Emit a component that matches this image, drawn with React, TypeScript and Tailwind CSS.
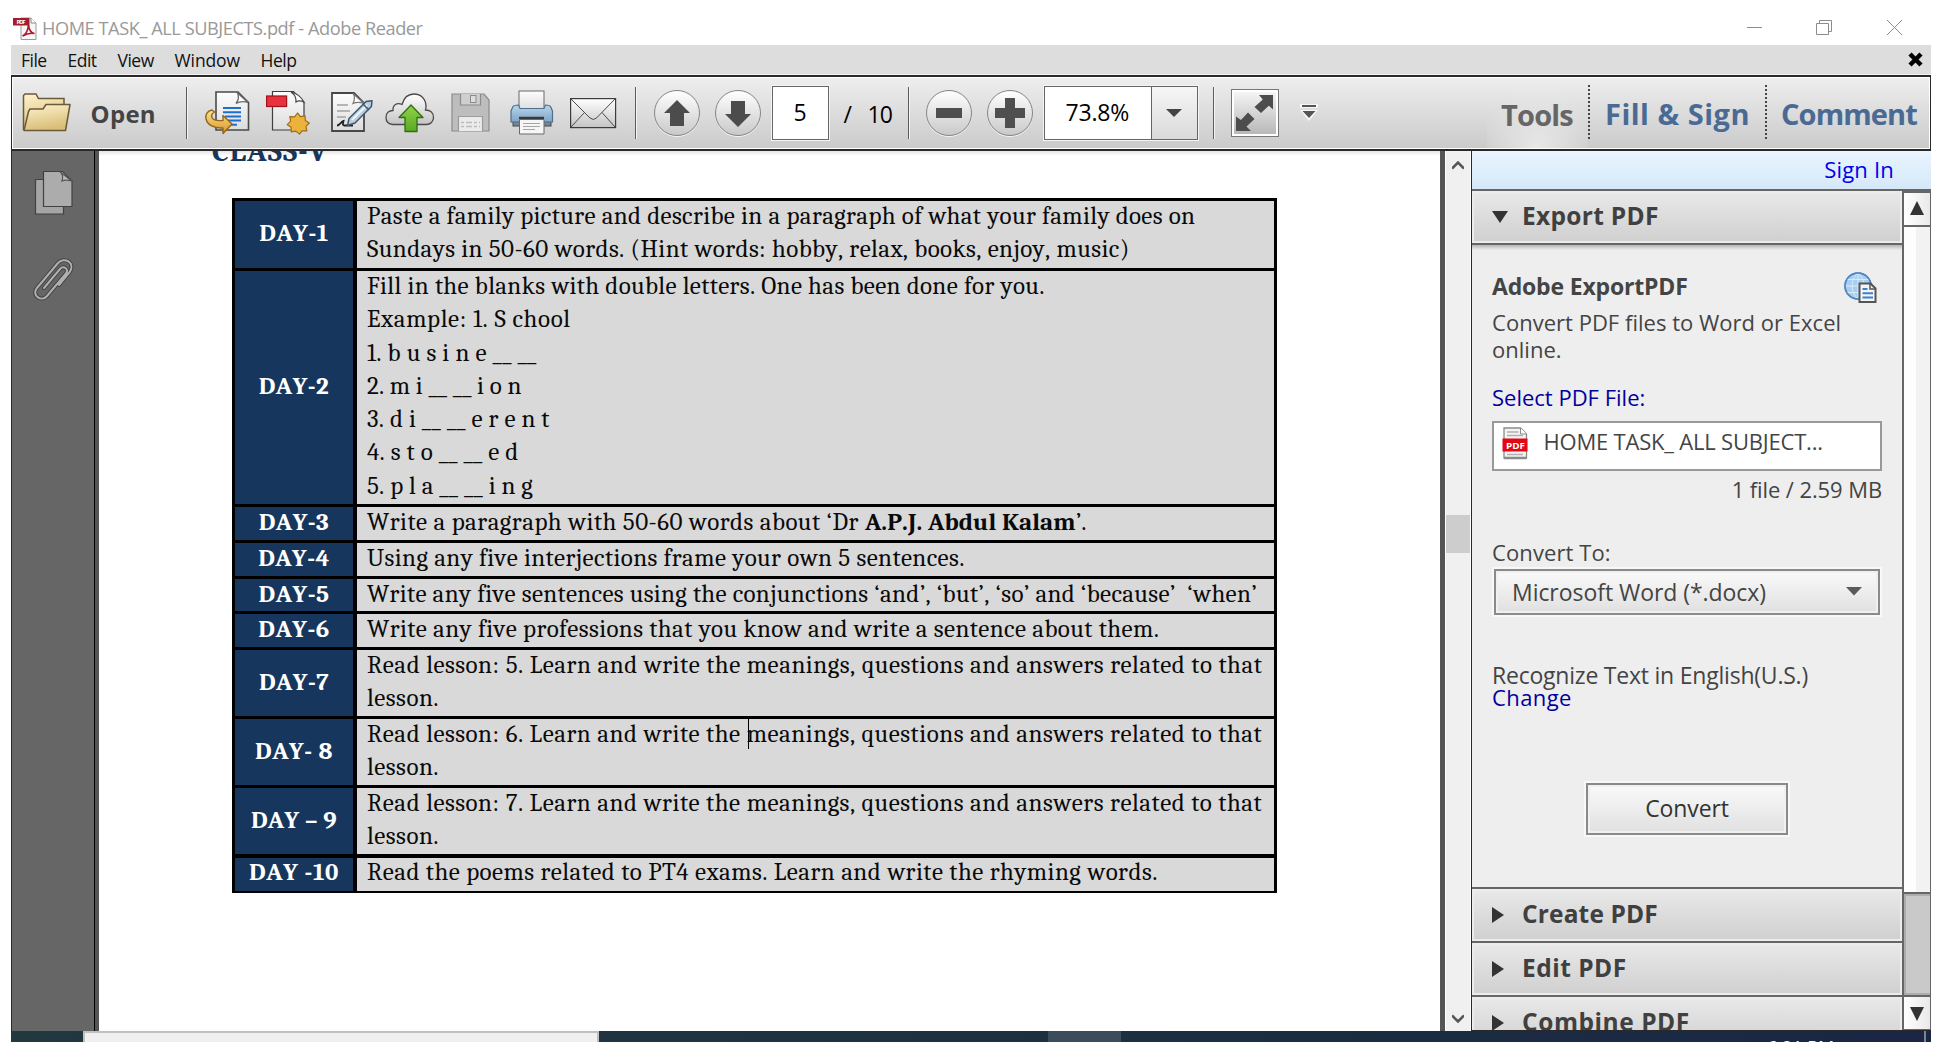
import type { ReactNode } from "react";

/* ---------- shared bits ---------- */

function Separator({ className }: { className: string }) {
  return <div className={`h-[52px] w-px shrink-0 bg-[#5c5c5c] shadow-[1px_0_0_#f4f4f4] ${className}`} />;
}

function RoundButton({ className, children }: { className: string; children: ReactNode }) {
  return (
    <button
      className={`flex size-[46px] shrink-0 items-center justify-center rounded-full border-[1.5px] border-[#858585] bg-linear-to-b from-white to-[#c9c9c9] shadow-[0_1px_0_#f5f5f5] ${className}`}
    >
      {children}
    </button>
  );
}

/* ---------- icons ---------- */

function ReaderIcon() {
  return (
    <svg width="24" height="24" viewBox="0 0 24 24">
      <path d="M8 1h10l5 5v16.500H8z" fill="#f6f6f6" stroke="#9a9a9a" strokeWidth="1" />
      <path d="M18 1v5h5" fill="#fff" stroke="#8a8a8a" strokeWidth="1" />
      <path d="M9.500 19c3-1.500 5.500-6 6-11 .5 5 2.500 8 6 8.500-4-.8-8 .2-12 2.500z" fill="none" stroke="#b3172b" strokeWidth="1.700" />
      <rect x="0" y="1" width="16.500" height="7.500" fill="#a51c2e" />
      <text x="3.600" y="7" fontSize="6" fontWeight="700" fontFamily="Open Sans" fill="#fff" textLength="9">PDF</text>
    </svg>
  );
}

function FolderIcon() {
  return (
    <svg width="50" height="42" viewBox="0 0 50 42">
      <defs>
        <linearGradient id="fold" x1="0" y1="0" x2="0.300" y2="1">
          <stop offset="0" stopColor="#fff3cf" />
          <stop offset="1" stopColor="#d9be78" />
        </linearGradient>
      </defs>
      <path d="M1.500 38V3.500L3 2h11l2.500 4.500H42V12" fill="url(#fold)" stroke="#6b5a39" strokeWidth="1.500" />
      <path d="M2 38.500L6.500 19.500 8 17h13l3-4.500H48L43.500 38.500z" fill="url(#fold)" stroke="#6b5a39" strokeWidth="1.500" strokeLinejoin="round" />
    </svg>
  );
}

function ConvertIcon() {
  return (
    <svg width="46" height="46" viewBox="0 0 46 46">
      <defs>
        <linearGradient id="pg" x1="0" y1="0" x2="0" y2="1">
          <stop offset="0" stopColor="#fdfdfd" />
          <stop offset="1" stopColor="#dcdcdc" />
        </linearGradient>
        <linearGradient id="gold" x1="0" y1="0" x2="0" y2="1">
          <stop offset="0" stopColor="#fbe28e" />
          <stop offset="1" stopColor="#d9962a" />
        </linearGradient>
      </defs>
      <path d="M12 2h22l10.500 10.500V40H12z" fill="url(#pg)" stroke="#4a4a4a" strokeWidth="1.600" />
      <path d="M33 2.500c2 3 2 7-1 11 4-2.500 9-2 12-1z" fill="#fff" stroke="#6a6a6a" strokeWidth="1.300" />
      <path d="M19 18h18M19 22.200h18M21 26.400h16M24 30.600h13M27 34.800h6" stroke="#1c6fd0" strokeWidth="2" />
      <path d="M8 20c-5 1-7 5-6 9 1.500 6 8 9.500 17 9v5.500l9-9.500-9-8.500v5c-6 .5-10-.5-11-3-1-2 0-4 2.500-5.500z" fill="url(#gold)" stroke="#94651a" strokeWidth="1.400" strokeLinejoin="round" />
    </svg>
  );
}

function CreatePdfIcon() {
  return (
    <svg width="44" height="46" viewBox="0 0 44 46">
      <path d="M6.500 1.500h21l10.500 11v27.500H6.500z" fill="url(#pg)" stroke="#3f3f3f" strokeWidth="1.200" />
      <path d="M25 2c4 3 5 5 5 10 2-1.500 5-1.500 8 0C35 7 30 3 25 2z" fill="#fff" stroke="#4a4a4a" strokeWidth="1.200" />
      <rect x="0.600" y="6" width="20" height="10.500" fill="#e8323d" stroke="#a3121d" strokeWidth="1.200" />
      <path
        d="M32.500 24.500l3 3.600 4.600-.8.200 4.700 4 2.500-3.300 3.300.8 4.600-4.700 0-2.600 3.200-3.600-3-4.700.8-.1-4.700-3.800-2.500 3.300-3.500-.8-4.500 4.700.1z"
        transform="translate(-1 -1.5)"
        fill="#ebb23c"
        stroke="#a06c18"
        strokeWidth="1.200"
        strokeLinejoin="round"
      />
    </svg>
  );
}

function SignIcon() {
  return (
    <svg width="44" height="44" viewBox="0 0 44 44">
      <path d="M2 2h22l10 10v28H2z" fill="url(#pg)" stroke="#474747" strokeWidth="1.800" />
      <path d="M23 2.500c2 3 2 6 0 10 4-2 7-1.500 11 0z" fill="#fff" stroke="#777" strokeWidth="1.200" />
      <path d="M7 14h11M7 20h13M7 26h9" stroke="#b5b5b5" strokeWidth="2" />
      <path d="M7 34.500c3 0 4-4 6.500-4.500-1 3-1 4 .5 4.500h9" fill="none" stroke="#222" strokeWidth="1.800" />
      <path d="M36 10.500l6-.8-.6 5.800L25 32l-7.500 2.500 1.500-7z" fill="#b9cfdf" stroke="#41566a" strokeWidth="1.500" strokeLinejoin="round" />
      <path d="M22 29l15-15" stroke="#eef6fb" strokeWidth="2" />
      <path d="M33 13l6 6" stroke="#41566a" strokeWidth="1.500" />
    </svg>
  );
}

function CloudIcon() {
  return (
    <svg width="50" height="40" viewBox="0 0 50 40">
      <defs>
        <linearGradient id="grn" x1="0" y1="0" x2="0" y2="1">
          <stop offset="0" stopColor="#8fd44b" />
          <stop offset="1" stopColor="#5aa822" />
        </linearGradient>
        <linearGradient id="cld" x1="0" y1="0" x2="0" y2="1">
          <stop offset="0" stopColor="#fff" />
          <stop offset="1" stopColor="#c4c4c4" />
        </linearGradient>
      </defs>
      <path d="M8 31.500C3 31 1 28 1 24.500 1 20 4 17.500 8 17.500 7.500 12 12 9 17 11.500 19 4 24 1 29 1c7 0 12 5 12 12.500 0 1.500-.3 2.500-.5 3.500 5 0 8 3 8 7.500 0 4-3 7-7 7z" fill="url(#cld)" stroke="#4a4a4a" strokeWidth="1.300" />
      <path d="M26 12L38 24.500H32V38.500H20V24.500H14z" fill="url(#grn)" stroke="#2f6f12" strokeWidth="1.300" strokeLinejoin="round" />
    </svg>
  );
}

function SaveIcon() {
  return (
    <svg width="40" height="40" viewBox="0 0 40 40">
      <path d="M1 1h32l5 6v31H1z" fill="#bdbdbd" stroke="#8b8b8b" strokeWidth="1.200" />
      <path d="M9.500 1v11h20V1" fill="#cfcfcf" stroke="#8b8b8b" strokeWidth="1.200" />
      <rect x="19.500" y="2.500" width="5.500" height="7" fill="#dedede" stroke="#8b8b8b" />
      <path d="M7.500 38V23.500h24V38" fill="#ebebeb" stroke="#9b9b9b" strokeWidth="1.200" />
      <path d="M10 29.500h19M10 33.500h19" stroke="#bcbcbc" strokeWidth="1.500" strokeDasharray="3 2 6 2" />
    </svg>
  );
}

function PrintIcon() {
  return (
    <svg width="44" height="46" viewBox="0 0 44 46">
      <defs>
        <linearGradient id="prn" x1="0" y1="0" x2="0" y2="1">
          <stop offset="0" stopColor="#b9d5ea" />
          <stop offset="1" stopColor="#7fa5c9" />
        </linearGradient>
      </defs>
      <rect x="3" y="30" width="38" height="6" fill="#7d858c" stroke="#43494e" />
      <rect x="9" y="1" width="25" height="20" fill="url(#pg)" stroke="#6a6a6a" />
      <path d="M3 16.500c1-1.500 3-1.500 5.500-1.500L10 18.500h24L35.500 15c3 0 4 0 5 1.500L42.500 21v11H1V21z" fill="url(#prn)" stroke="#4e6f8e" strokeWidth="1.200" />
      <path d="M9 28h25" stroke="#3a3a3a" strokeWidth="2.500" />
      <path d="M9.500 29.500h24.500v14.500H9.500z" fill="#f6f6f6" stroke="#6a6a6a" />
      <path d="M13 33.500h17M13 36.500h17M13 39.500h12" stroke="#a5a5a5" strokeWidth="1.200" />
    </svg>
  );
}

function MailIcon() {
  return (
    <svg width="47" height="32" viewBox="0 0 47 32">
      <rect x="0.600" y="0.600" width="45" height="29" fill="url(#cld)" stroke="#3c3c3c" strokeWidth="1.200" />
      <path d="M1 1l19 19q3.500 3 6.500 0L45 1M1 29l13.500-14.500M45 29L32 14.500" fill="none" stroke="#4a4a4a" strokeWidth="1" />
    </svg>
  );
}

function FitIcon() {
  return (
    <svg width="42" height="42" viewBox="0 0 42 42">
      <path d="M25 3L39 3V17.500L34.800 13.800 27 21 20.500 15 28.800 7.500z" fill="#4d4d4d" />
      <path d="M2 24.500V39H17L12.500 34.500 20.500 27 14 20.500 7 28z" fill="#4d4d4d" />
    </svg>
  );
}

function PaperclipIcon() {
  return (
    <svg width="42" height="48" viewBox="0 0 42 48">
      <g fill="none" strokeLinecap="round" strokeLinejoin="round">
        <path d="M12 32L28 13c3.500-4 9 0 6 4.500L15 40c-5 6-15.500 0-10.500-7.500L26 7c6-7 17.500 0 12 8.500L27 29" stroke="#414141" strokeWidth="4" />
        <path d="M12 32L28 13c3.500-4 9 0 6 4.500L15 40c-5 6-15.500 0-10.500-7.500L26 7c6-7 17.500 0 12 8.500L27 29" stroke="#b0b0b0" strokeWidth="2" />
      </g>
    </svg>
  );
}

function PagesIcon() {
  return (
    <svg width="40" height="46" viewBox="0 0 40 46">
      <path d="M1.500 9.500h28v34.500h-28z" fill="#a5a5a5" stroke="#414141" strokeWidth="1.200" />
      <path d="M9.500 1.500h19l9.500 9.500v25.500H9.500z" fill="#acacac" stroke="#414141" strokeWidth="1.200" />
      <path d="M26 2c3 2 3 6 2 9 3-1.500 6-1 10 0z" fill="#bcbcbc" stroke="#555" strokeWidth="1.200" />
    </svg>
  );
}

function GlobeDocIcon() {
  return (
    <svg width="34" height="33" viewBox="0 0 34 33">
      <circle cx="14" cy="14" r="13" fill="#a9cdef" stroke="#4f87c4" strokeWidth="1.500" />
      <path d="M14 1v26M1 14h26M3 7.500h22M3 20.500h22M14 1c-8 7-8 19 0 26M14 1c8 7 8 19 0 26" fill="none" stroke="#d9ebfb" strokeWidth="1" />
      <circle cx="14" cy="14" r="13" fill="none" stroke="#4f87c4" strokeWidth="1.500" />
      <path d="M15.500 11.500h11l5 5V30h-16z" fill="#f5f5f5" stroke="#555" strokeWidth="2" />
      <path d="M26 12v5h5" fill="none" stroke="#555" strokeWidth="1.500" />
      <path d="M18.500 17h5M18.500 21.300h10.500M18.500 25.500h10.500" stroke="#3b7fd0" strokeWidth="2" />
    </svg>
  );
}

function PdfFileIcon() {
  return (
    <svg width="27" height="33" viewBox="0 0 27 33">
      <path d="M2 1h16.500l6 6v24H2z" fill="#f4f4f4" stroke="#8a8a8a" strokeWidth="1.300" />
      <path d="M18.500 1v6h6" fill="#fff" stroke="#8a8a8a" />
      <path d="M5 5h11.500M5 8.500h16M5 27.500h16" stroke="#b0b0b0" strokeWidth="1.300" />
      <path d="M2 31h22.500" stroke="#8b8b8b" strokeWidth="2.500" />
      <rect x="0.500" y="11.500" width="25" height="13" fill="#e30613" />
      <text x="4" y="21.500" fontSize="9.500" fontWeight="700" fontFamily="Open Sans" fill="#fff" textLength="19" lengthAdjust="spacingAndGlyphs">PDF</text>
    </svg>
  );
}

function Triangle({ dir, className }: { dir: "down" | "right" | "up"; className?: string }) {
  const d = { down: "M0 0H16L8 12z", right: "M0 0L12 8L0 16z", up: "M8 0L15 14H1z" }[dir];
  return (
    <svg width="16" height="16" viewBox="0 0 16 16" className={className}>
      <path d={d} fill="#333" />
    </svg>
  );
}

/* ---------- document ---------- */

const serif = "font-[Caladea,Cambria,'Liberation_Serif',serif]";

function Row({
  day,
  height,
  dayClass = "tracking-[0.5px]",
  children,
}: {
  day: string;
  height: string;
  dayClass?: string;
  children: ReactNode;
}) {
  return (
    <div className={`flex gap-[4px] ${height}`}>
      <div className="flex w-[118px] items-center justify-center bg-[#17365d] font-bold text-white">
        <span className={`-mt-[3px] whitespace-pre ${dayClass}`}>{day}</span>
      </div>
      <div className="w-[917px] bg-[#d9d9d9] pl-[10px] whitespace-pre text-[#0a0a0a]">
        <div className="-mt-[2px]">{children}</div>
      </div>
    </div>
  );
}

function LessonText({ n, caret }: { n: number; caret?: boolean }) {
  return (
    <>
      <div className="relative tracking-[0.51px]">
        Read lesson: {n}. Learn and write the meanings, questions and answers related to that
        {caret && <span className="absolute top-[1px] left-[381px] h-[31px] w-px bg-black" />}
      </div>
      <div className="tracking-[0.5px]">lesson.</div>
    </>
  );
}

function DocumentPage() {
  return (
    <div
      className={`flex w-[1341px] flex-col overflow-hidden bg-[linear-gradient(#e6e6e6,white_5px)] text-[25px] leading-[33.300px] [font-kerning:none] ${serif}`}
    >
      <div className="h-[47px] shrink-0 overflow-hidden pl-[113px]">
        <h1 className="-mt-[16px] text-[30px] leading-[34px] font-bold tracking-[1.1px] text-[#17365d]">CLASS-V</h1>
      </div>
      <div className="ml-[133px] flex w-[1045px] shrink-0 flex-col gap-[3px] bg-black p-[3px]">
        <Row day="DAY-1" height="h-[67px]">
          <div className="tracking-[0.35px]">Paste a family picture and describe in a paragraph of what your family does on</div>
          <div className="tracking-[0.4px]">Sundays in 50-60 words. (Hint words: hobby, relax, books, enjoy, music)</div>
        </Row>
        <Row day="DAY-2" height="h-[233px]">
          <div className="tracking-[0.35px]">Fill in the blanks with double letters. One has been done for you.</div>
          <div className="tracking-[0.6px]">Example: 1. S chool</div>
          <div className="tracking-[0.3px]">1. b u s i n e __ __</div>
          <div className="tracking-[0.1px]">2. m i __ __ i o n</div>
          <div className="tracking-[0.25px]">3. d i __ __ e r e n t</div>
          <div className="tracking-[0.25px]">4. s t o __ __ e d</div>
          <div className="tracking-[0.2px]">5. p l a __ __ i n g</div>
        </Row>
        <Row day="DAY-3" height="h-[33px]">
          <span className="tracking-[0.46px]">Write a paragraph with 50-60 words about ‘Dr </span>
          <b className="tracking-[0.1px]">A.P.J. Abdul Kalam</b>
          <span>’.</span>
        </Row>
        <Row day="DAY-4" height="h-[33px]">
          <div className="tracking-[0.39px]">Using any five interjections frame your own 5 sentences.</div>
        </Row>
        <Row day="DAY-5" height="h-[32px]">
          <div className="tracking-[0.32px]">Write any five sentences using the conjunctions ‘and’, ‘but’, ‘so’ and ‘because’  ‘when’</div>
        </Row>
        <Row day="DAY-6" height="h-[33px]">
          <div className="tracking-[0.4px]">Write any five professions that you know and write a sentence about them.</div>
        </Row>
        <Row day="DAY-7" height="h-[66px]">
          <LessonText n={5} />
        </Row>
        <Row day="DAY- 8" height="h-[66px]">
          <LessonText n={6} caret />
        </Row>
        <Row day="DAY – 9" height="h-[66px]" dayClass="tracking-[0.2px]">
          <LessonText n={7} />
        </Row>
        <div className="-mb-px -translate-y-0 pt-px">
          <Row day="DAY -10" height="h-[33px]" dayClass="-translate-y-px tracking-[0.6px]">
            <div className="-mt-[3px] tracking-[0.45px]">Read the poems related to PT4 exams. Learn and write the rhyming words.</div>
          </Row>
        </div>
      </div>
    </div>
  );
}

/* ---------- tools panel ---------- */

function PanelHeader({ title, open, height, className }: { title: string; open?: boolean; height: string; className: string }) {
  return (
    <div className={`flex shrink-0 border-2 border-[#ececec] bg-linear-to-b from-[#e8e8e8] to-[#d0d0d0] pl-[18px] ${height}`}>
      <Triangle dir={open ? "down" : "right"} className={open ? "mt-[18px]" : "mt-[15.500px]"} />
      <span className={`ml-[14px] text-[24.500px] leading-[45px] font-bold text-[#404040] ${className}`}>{title}</span>
    </div>
  );
}

function ToolsPanel() {
  return (
    <div className="flex w-[430px] flex-col bg-[#eee] text-[#444]">
      <PanelHeader title="Export PDF" open height="h-[52px]" className="tracking-[0.3px]" />
      <div className="h-[2px] shrink-0 bg-[#666]" />
      <div className="flex h-[642px] shrink-0 flex-col bg-[linear-gradient(#b5b5b5,#eee_5px)] pr-[20px] pl-[20px] text-[22px]">
        <div className="flex h-[64px] items-start justify-between">
          <span className="mt-[26px] text-[23px] leading-[30px] font-bold tracking-[-0.18px]">Adobe ExportPDF</span>
          <span className="mt-[27px] mr-[4px]">
            <GlobeDocIcon />
          </span>
        </div>
        <p className="leading-[27px] tracking-[0.02px] whitespace-pre">{"Convert PDF files to Word or Excel\nonline."}</p>
        <p className="mt-[19px] leading-[30px] tracking-[0px] text-[#00009c]">Select PDF File:</p>
        <div className="mt-[9px] flex h-[50px] shrink-0 items-start border-2 border-[#999] bg-white pl-[8px]">
          <span className="mt-[4px]">
            <PdfFileIcon />
          </span>
          <span className="ml-[14.500px] leading-[37px] tracking-[-0.2px]">HOME TASK_ ALL SUBJECT...</span>
        </div>
        <p className="mt-[3px] text-right leading-[30px] tracking-[-0.1px]">1 file / 2.59 MB</p>
        <p className="mt-[33px] leading-[30px] tracking-[0.1px]">Convert To:</p>
        <div className="h-[50px] shrink-0 border-2 border-[#f8f8f8]">
          <div className="flex h-full justify-between border-2 border-[#8a8a8a] bg-linear-to-b from-[#fafafa] to-[#e0e0e0] pr-[15px] pl-[16px] shadow-[inset_0_0_0_2px_#f0f0f0]">
            <span className="text-[23px] leading-[43px] tracking-[-0.05px]">Microsoft Word (*.docx)</span>
            <svg width="18" height="10" viewBox="0 0 18 10" className="mt-[16px]">
              <path d="M1 0H17L9 8.500z" fill="#5a5a5a" />
            </svg>
          </div>
        </div>
        <p className="mt-[46px] text-[23px] leading-[24px] tracking-[-0.22px] whitespace-nowrap">Recognize Text in English(U.S.)</p>
        <p className="leading-[21px] tracking-[0.4px] text-[#00009c]">Change</p>
        <div className="mt-[73px] ml-[92px] h-[56px] w-[206px] shrink-0 border-2 border-[#f8f8f8]">
          <div className="h-full border-2 border-[#8a8a8a] bg-linear-to-b from-[#fafafa] to-[#e0e0e0] text-center text-[23px] leading-[46px] tracking-[-0.1px] text-[#333] shadow-[inset_0_0_0_2px_#f0f0f0]">
            Convert
          </div>
        </div>
      </div>
      <div className="flex flex-col gap-[2px] overflow-hidden bg-[#666] pt-[2px]">
        <PanelHeader title="Create PDF" height="h-[52px]" className="tracking-[0.15px]" />
        <PanelHeader title="Edit PDF" height="h-[52px]" className="tracking-[0.5px]" />
        <PanelHeader title="Combine PDF" height="h-[52px]" className="tracking-[0.55px]" />
      </div>
    </div>
  );
}

function PanelScrollbar() {
  return (
    <div className="flex w-[29px] flex-col border-r border-l-2 border-[#666] bg-[#666]">
      <div className="mt-[2px] flex h-[32px] shrink-0 justify-center bg-linear-to-r from-white to-[#e9e9e9]">
        <Triangle dir="up" className="mt-[8px]" />
      </div>
      <div className="mt-[2px] h-[665px] shrink-0 bg-[linear-gradient(90deg,#fdfdfd_46%,#f2f2f2_46%)]" />
      <div className="mt-[2px] h-[101px] shrink-0 border-2 border-r-0 border-[#adadad] bg-[#c9c9c9]" />
      <div className="mt-[2px] flex h-[32px] shrink-0 justify-center bg-linear-to-r from-white to-[#e9e9e9]">
        <svg width="14" height="14" viewBox="0 0 14 14" className="mt-[10px]">
          <path d="M0 0H14L7 14z" fill="#333" />
        </svg>
      </div>
    </div>
  );
}

/* ---------- chrome ---------- */

function TitleBar() {
  return (
    <header className="flex h-[45px] shrink-0 pl-[13px] text-[#999]">
      <span className="mt-[17px]">
        <ReaderIcon />
      </span>
      <span className="mt-[11px] ml-[5px] w-[1700px] text-[18.200px] leading-[34px] tracking-[-0.44px]">
        HOME TASK_ ALL SUBJECTS.pdf - Adobe Reader
      </span>
      <svg width="160" height="17" viewBox="0 0 160 17" className="mt-[20px] ml-[5px] shrink-0">
        <g fill="none" stroke="#8c8c8c">
          <path d="M0 7.500H15" />
          <path d="M69.500 3.500H81.500V14.500H69.500zM72.500 3V.5H84.500V11.500H82" />
          <path d="M140 0L155 15M155 0L140 15" />
        </g>
      </svg>
    </header>
  );
}

function MenuBar() {
  return (
    <nav className="ml-[11px] flex h-[30px] w-[1920px] shrink-0 border-b border-[#f2f2f2] bg-[#ddd] pl-[10px] text-[17.500px] leading-[31px] tracking-[-0.5px] text-[#111]">
      <span className="w-[46.500px]">File</span>
      <span className="w-[50px]">Edit</span>
      <span className="w-[57px]">View</span>
      <span className="w-[86px] tracking-[-0.1px]">Window</span>
      <span>Help</span>
      <svg width="15" height="15" viewBox="0 0 15 15" className="mt-[7px] mr-[8px] ml-auto">
        <path d="M2 2L13 13M13 2L2 13" stroke="#000" strokeWidth="4.500" />
      </svg>
    </nav>
  );
}

function Toolbar() {
  return (
    <div className="ml-[11px] h-[76px] w-[1920px] shrink-0 border-x border-y-2 border-[#2b2829]">
      <div className="flex h-full items-center border border-white bg-linear-to-b from-[#eeeeee] to-[#cbcbcb] text-[23px] text-black">
        <span className="ml-[9px] w-[50px]">
          <FolderIcon />
        </span>
        <span className="mt-[2px] ml-[18.500px] w-[65px] text-[24px] font-bold tracking-[0.3px] text-[#444]">Open</span>
        <Separator className="ml-[30px]" />
        <span className="ml-[17px] w-[46px] shrink-0">
          <ConvertIcon />
        </span>
        <span className="ml-[16px] w-[44px] shrink-0">
          <CreatePdfIcon />
        </span>
        <span className="ml-[20px] w-[44px] shrink-0">
          <SignIcon />
        </span>
        <span className="ml-[11px] w-[50px] shrink-0">
          <CloudIcon />
        </span>
        <span className="ml-[16px] w-[40px] shrink-0">
          <SaveIcon />
        </span>
        <span className="ml-[19px] w-[44px] shrink-0">
          <PrintIcon />
        </span>
        <span className="mt-[2px] ml-[16px] w-[47px] shrink-0">
          <MailIcon />
        </span>
        <Separator className="ml-[18px]" />
        <RoundButton className="ml-[18px]">
          <svg width="26" height="26" viewBox="0 0 26 26">
            <path d="M13 0L26 13H20V26H6V13H0z" fill="#4c4c4c" />
          </svg>
        </RoundButton>
        <RoundButton className="ml-[15px]">
          <svg width="26" height="26" viewBox="0 0 26 26" className="mt-[2px]">
            <path d="M13 26L26 13H20V0H6V13H0z" fill="#4c4c4c" />
          </svg>
        </RoundButton>
        <div className="ml-[11px] h-[54px] w-[57px] shrink-0 border border-[#666] bg-white text-center leading-[51px] shadow-[0_0_0_1px_#f4f4f4]">
          5
        </div>
        <span className="mt-[2px] ml-[15px] w-[24px] shrink-0">/</span>
        <span className="mt-[2px] w-[40px] shrink-0 tracking-[-0.8px]">10</span>
        <Separator className="" />
        <RoundButton className="ml-[17px]">
          <span className="h-[10px] w-[26px] bg-[#4f4f4f]" />
        </RoundButton>
        <RoundButton className="ml-[15px]">
          <svg width="30" height="30" viewBox="0 0 30 30">
            <path d="M10 0H20V10H30V20H20V30H10V20H0V10H10z" fill="#4f4f4f" />
          </svg>
        </RoundButton>
        <div className="ml-[11px] flex h-[54px] w-[154px] shrink-0 border border-[#666] bg-white shadow-[0_0_0_1px_#f4f4f4]">
          <span className="w-[106px] pl-[21px] leading-[51px] tracking-[-0.2px]">73.8%</span>
          <div className="flex flex-1 items-center justify-center border-l border-[#666] bg-linear-to-b from-[#f6f6f6] to-[#dadada]">
            <svg width="16" height="8" viewBox="0 0 16 8">
              <path d="M0 0H16L8 8z" fill="#444" />
            </svg>
          </div>
        </div>
        <Separator className="ml-[15px]" />
        <div className="ml-[17px] flex size-[48px] shrink-0 items-center justify-center border border-[#777] bg-linear-to-b from-[#f8f8f8] to-[#b5b5b5] shadow-[inset_0_0_0_2px_white]">
          <FitIcon />
        </div>
        <svg width="18" height="17" viewBox="0 0 18 17" className="mt-[-1px] ml-[21px] shrink-0">
          <path d="M0 0H18V4H0zM0 6H18L9 17z" fill="#f6f6f6" />
          <path d="M2 1H16V3H2zM2.500 7H15.500L9 14z" fill="#555" />
        </svg>
        <div className="flex h-full flex-1 items-center justify-end pr-[10px] text-[29px] leading-[73px] font-bold whitespace-nowrap text-[#4a6a94]">
          <span className="h-full w-[101px] bg-[radial-gradient(ellipse_60%_90%_at_50%_100%,#e8e8e8,transparent)] pl-[14px] tracking-[-0.8px] text-[#666]">
            Tools
          </span>
          <span className="mr-[15px] h-[56px] w-[2px] bg-[repeating-linear-gradient(#444_0_2px,transparent_2px_4px)]" />
          <span className="mt-[1px] w-[145px] tracking-[0.5px]">Fill &amp; Sign</span>
          <span className="mr-[14px] ml-[15px] h-[56px] w-[2px] bg-[repeating-linear-gradient(#444_0_2px,transparent_2px_4px)]" />
          <span className="mt-[1px] w-[138px] tracking-[-0.9px]">Comment</span>
        </div>
      </div>
    </div>
  );
}

function Chevron({ up }: { up?: boolean }) {
  return (
    <svg width="12" height="10" viewBox="0 0 12 10">
      <path d={up ? "M0 7.500L6 1.500L12 7.500" : "M0 1.500L6 7.500L12 1.500"} fill="none" stroke="#555" strokeWidth="2.500" />
    </svg>
  );
}

export default function App() {
  return (
    <div className="flex h-[1042px] w-[1942px] flex-col overflow-hidden bg-white font-['Open_Sans',sans-serif]">
      <TitleBar />
      <MenuBar />
      <Toolbar />
      <main className="ml-[11px] flex h-[880px] w-[1920px] shrink-0 overflow-hidden">
        <aside className="flex w-[84px] shrink-0 flex-col border-r border-l border-r-black border-l-[#2b2829] bg-[#666] pl-[22px]">
          <span className="mt-[19px]">
            <PagesIcon />
          </span>
          <span className="mt-[40px] -ml-[2px]">
            <PaperclipIcon />
          </span>
        </aside>
        <div className="w-[4px] shrink-0 bg-[#555]" />
        <DocumentPage />
        <div className="w-[5px] shrink-0 bg-[#555]" />
        <div className="flex w-[26px] shrink-0 flex-col items-center border-x border-white bg-[#f0f0f0] pt-[10px]">
          <Chevron up />
          <div className="mt-[344px] h-[38px] w-full bg-[#cdcdcd]" />
          <div className="mt-[461px]">
            <Chevron />
          </div>
        </div>
        <div className="flex w-[460px] shrink-0 flex-col border-b border-l border-[#2b2829]">
          <div className="h-[40px] shrink-0 border-b-2 border-[#666] bg-linear-to-b from-[#e9f5ff] to-[#d5e8f8] pr-[37px] text-right text-[22px] leading-[36px] tracking-[0.2px] text-[#0000ee]">
            Sign In
          </div>
          <div className="flex h-[839px] overflow-hidden">
            <ToolsPanel />
            <PanelScrollbar />
          </div>
        </div>
      </main>
      <footer className="ml-[11px] flex h-[11px] w-[1920px] shrink-0 overflow-hidden bg-linear-to-r from-[#22383f] via-[#1d3140] to-[#1a2644]">
        <div className="ml-[72px] w-[516px] border-2 border-b-0 border-[#c0c0c0] bg-[#f0f0f0]" />
        <div className="ml-[449px] w-[73px] bg-[#3c4c5a]" />
        <span className="mt-[4px] ml-[646px] w-[157px] text-[18px] leading-[24px] text-white">6:21 PM</span>
        <div className="w-[2px] bg-[#7c8494]" />
      </footer>
    </div>
  );
}
